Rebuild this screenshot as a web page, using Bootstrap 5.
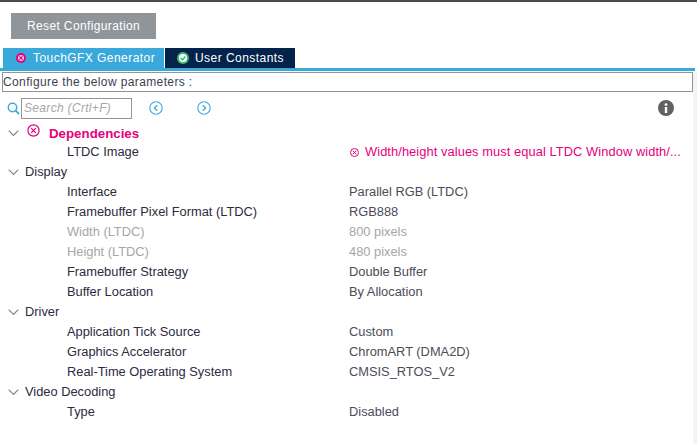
<!DOCTYPE html>
<html lang="en">
<head>
  <meta charset="UTF-8">
  <title>TouchGFX Generator</title>
  <link rel="stylesheet" href="https://cdn.jsdelivr.net/npm/bootstrap@5.3.0/dist/css/bootstrap.min.css">
  <style>
    body {
      font-family: "Liberation Sans", Arial, sans-serif;
      font-size: 12.85px;
      line-height: 20px;
      color: #2b2b40;
      background: #fff;
      width: 697px;
      height: 444px;
      overflow: hidden;
    }
    .top-strip { height: 2px; background: #4a4a4a; }
    .reset-btn {
      width: 145px; height: 26px; margin: 11px 0 9px 11px; padding: 0;
      background: #90959a; color: #fff; border: 0; border-radius: 0;
      font-size: 12px; letter-spacing: .37px;
    }
    .tab-row { padding-left: 3px; gap: 1px; height: 20px; }
    .tab-item {
      height: 20px; color: #fff; font-size: 12px; letter-spacing: .45px;
      padding-left: 13px; gap: 7px; line-height: 18px;
    }
    .tab-blue { width: 161px; background: #39a9dc; }
    .tab-navy { width: 130px; background: #03234b; padding-left: 12px; gap: 6px; }
    .tab-line { height: 3px; background: #39a9dc; margin-right: 2px; }
    .config-box {
      height: 20px; margin: 1px 4px 0 2px; border: 1px solid #90959a;
      padding-left: 0; font-size: 12px; line-height: 18px; letter-spacing: .38px; color: #3e3e50;
    }
    .search-row { height: 22px; margin-top: 5px; padding-left: 7px; }
    .search-box {
      width: 111px; height: 21px; margin-left: 1px; border: 1px solid #90959a;
      padding-left: 2px; font-size: 12px; line-height: 19px; font-style: italic; color: #a5a7aa;
      letter-spacing: .32px;
    }
    .nav-prev { margin-left: 17px; }
    .nav-next { margin-left: 34px; }
    .info-dot { margin-left: auto; margin-right: 23px; }
    .tree-list { margin-top: 3px; }
    .tree-row { height: 20px; }
    .tree-group { padding-left: 8px; }
    .tree-group > svg:first-child { margin-right: 6px; flex: none; }
    .tree-item { padding-left: 67px; }
    .tree-label { width: 282px; flex: none; }
    .tree-value { color: #4c4c58; }
    .off { color: #a6a6a6; }
    .off .tree-value { color: #a6a6a6; }
    .dep-row { align-items: flex-start; }
    .dep-row > svg:first-child { margin-top: 8px; }
    .dep-title { color: #e6007e; font-weight: 700; font-size: 13.3px; margin-left: 9px; padding-top: 2px; }
    .dep-value { color: #e6007e; letter-spacing: .08px; }
    .dep-icon { margin-left: 2px; margin-top: 2px; }
    .dep-mark { margin: 0 6px 0 1px; }
    .edge-strip { right: 0; top: 72px; bottom: 0; width: 4px; background: #f4f4f4; }
  </style>
</head>
<body class="position-relative">
  <div class="top-strip"></div>
  <button type="button" class="btn reset-btn d-block">Reset Configuration</button>

  <!-- tabs -->
  <div class="d-flex tab-row">
    <div class="d-flex align-items-center tab-item tab-blue">
      <svg width="10" height="10" viewBox="0 0 10 10"><circle cx="5" cy="5" r="5" fill="#e6007e"/><circle cx="5" cy="5" r="3" fill="#f7d0e6"/><path d="M3.4 3.4l3.2 3.2M6.6 3.4l-3.2 3.2" stroke="#e6007e" stroke-width="1.2"/></svg>
      <span>TouchGFX Generator</span>
    </div>
    <div class="d-flex align-items-center tab-item tab-navy">
      <svg width="12" height="12" viewBox="0 0 12 12"><circle cx="6" cy="6" r="6" fill="#3cb878"/><circle cx="6" cy="6" r="4" fill="#fff"/><path d="M3.6 6l1.8 1.8 3-3.2" fill="none" stroke="#3cb878" stroke-width="1.5"/></svg>
      <span>User Constants</span>
    </div>
  </div>
  <div class="tab-line"></div>
  <div class="config-box">Configure the below parameters :</div>

  <!-- search -->
  <div class="d-flex align-items-center search-row">
    <svg width="13" height="13" viewBox="0 0 13 13"><circle cx="5.5" cy="5.5" r="4.2" fill="none" stroke="#39a9dc" stroke-width="1.5"/><path d="M8.6 8.6l3.6 3.6" stroke="#39a9dc" stroke-width="1.7"/></svg>
    <div class="search-box">Search (Crtl+F)</div>
    <svg class="nav-prev" width="14" height="14" viewBox="0 0 14 14"><circle cx="7" cy="7" r="6.2" fill="none" stroke="#39a9dc" stroke-width="1.1"/><path d="M8.2 4.2L5.4 7l2.8 2.8" fill="none" stroke="#39a9dc" stroke-width="1.3"/></svg>
    <svg class="nav-next" width="14" height="14" viewBox="0 0 14 14"><circle cx="7" cy="7" r="6.2" fill="none" stroke="#39a9dc" stroke-width="1.1"/><path d="M5.8 4.2L8.6 7l-2.8 2.8" fill="none" stroke="#39a9dc" stroke-width="1.3"/></svg>
    <svg class="info-dot" width="16" height="16" viewBox="0 0 16 16"><circle cx="8" cy="8" r="8" fill="#616161"/><rect x="6.8" y="7" width="2.4" height="6" fill="#fff"/><circle cx="8" cy="4.6" r="1.4" fill="#fff"/></svg>
  </div>

  <!-- parameter tree -->
  <div class="tree-list" id="tree"></div>

  <div class="position-absolute edge-strip"></div>

  <script src="https://cdn.jsdelivr.net/npm/bootstrap@5.3.0/dist/js/bootstrap.bundle.min.js"></script>
  <script>
    const chevron = '<svg width="11" height="7" viewBox="0 0 11 7"><path d="M.7.7l4.8 4.8L10.3.7" fill="none" stroke="#808080" stroke-width="1.1"/></svg>';
    const groups = [
      ['Display', [
        ['Interface', 'Parallel RGB (LTDC)'],
        ['Framebuffer Pixel Format (LTDC)', 'RGB888'],
        ['Width (LTDC)', '800 pixels', true],
        ['Height (LTDC)', '480 pixels', true],
        ['Framebuffer Strategy', 'Double Buffer'],
        ['Buffer Location', 'By Allocation']
      ]],
      ['Driver', [
        ['Application Tick Source', 'Custom'],
        ['Graphics Accelerator', 'ChromART (DMA2D)'],
        ['Real-Time Operating System', 'CMSIS_RTOS_V2']
      ]],
      ['Video Decoding', [
        ['Type', 'Disabled']
      ]]
    ];
    let html = `
      <div class="d-flex tree-row tree-group dep-row">${chevron}
        <svg class="dep-icon" width="13" height="13" viewBox="0 0 13 13"><circle cx="6.5" cy="6.5" r="5.6" fill="none" stroke="#e6007e" stroke-width="1.2"/><path d="M4.2 4.2l4.6 4.6M8.8 4.2l-4.6 4.6" stroke="#e6007e" stroke-width="1.2"/></svg>
        <span class="dep-title">Dependencies</span>
      </div>
      <div class="d-flex align-items-center tree-row tree-item">
        <div class="tree-label">LTDC Image</div>
        <div class="d-flex align-items-center dep-value">
          <svg class="dep-mark" width="9" height="9" viewBox="0 0 9 9"><circle cx="4.5" cy="4.5" r="4" fill="none" stroke="#e6007e" stroke-width="1"/><path d="M2.8 2.8l3.4 3.4M6.2 2.8l-3.4 3.4" stroke="#e6007e"/></svg>
          <span>Width/height values must equal LTDC Window width/...</span>
        </div>
      </div>`;
    groups.forEach(([name, rows]) => {
      html += `<div class="d-flex align-items-center tree-row tree-group">${chevron}<span>${name}</span></div>`;
      rows.forEach(([label, value, off]) => {
        html += `<div class="d-flex align-items-center tree-row tree-item${off ? ' off' : ''}"><div class="tree-label">${label}</div><div class="tree-value">${value}</div></div>`;
      });
    });
    document.getElementById('tree').innerHTML = html;
  </script>
</body>
</html>
